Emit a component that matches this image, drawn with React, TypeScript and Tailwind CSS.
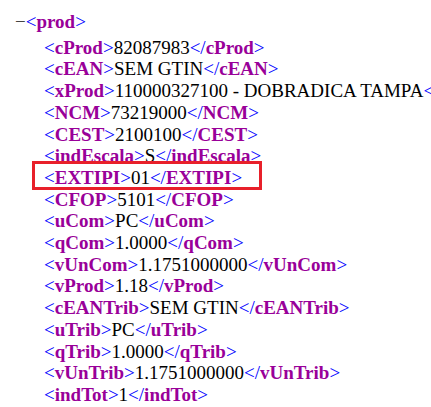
const rows: [string, string][] = [
  ["cProd", "82087983"],
  ["cEAN", "SEM GTIN"],
  ["xProd", "110000327100 - DOBRADICA TAMPA"],
  ["NCM", "73219000"],
  ["CEST", "2100100"],
  ["indEscala", "S"],
  ["EXTIPI", "01"],
  ["CFOP", "5101"],
  ["uCom", "PC"],
  ["qCom", "1.0000"],
  ["vUnCom", "1.1751000000"],
  ["vProd", "1.18"],
  ["cEANTrib", "SEM GTIN"],
  ["uTrib", "PC"],
  ["qTrib", "1.0000"],
  ["vUnTrib", "1.1751000000"],
  ["indTot", "1"],
];

function Tag({ name, close }: { name: string; close?: boolean }) {
  return (
    <>
      <span className="text-[#0000ff]">{close ? "</" : "<"}</span>
      <span className="font-bold text-[#990099]">{name}</span>
      <span className="text-[#0000ff]">&gt;</span>
    </>
  );
}

export default function App() {
  return (
    <div className="w-[431px] h-[407px] bg-white overflow-hidden font-[family-name:'Liberation_Serif',serif] text-[19px] leading-[21.7px] text-black pt-[11px] pl-[15px] whitespace-nowrap">
      <div>
        <span className="text-[#444]">−</span>
        <Tag name="prod" />
      </div>
      <div className="pl-[29px] mt-[4px]">
        {rows.map(([name, value]) => (
          <div key={name} className={name === "EXTIPI" ? "relative" : ""}>
            {name === "EXTIPI" && (
              <div className="absolute left-[-12px] top-[-6px] w-[230px] h-[29px] border-[3px] border-[#e8202a]" />
            )}
            <Tag name={name} />
            {value}
            <Tag name={name} close />
          </div>
        ))}
      </div>
    </div>
  );
}
